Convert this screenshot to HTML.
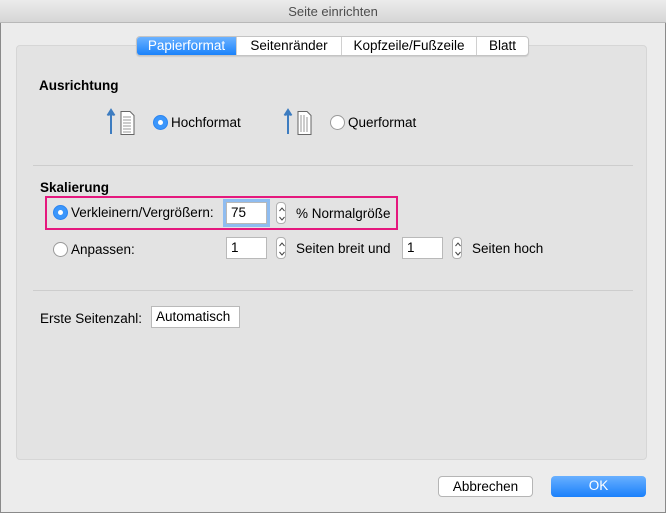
<!DOCTYPE html>
<html><head><meta charset="utf-8"><style>
*{box-sizing:border-box;margin:0;padding:0}
body{width:666px;height:513px;overflow:hidden;background:#ececec;font-family:"Liberation Sans",Arial,sans-serif;font-size:13.5px;color:#000;position:relative}
.a{position:absolute;white-space:nowrap}
.win{left:0;top:0;width:666px;height:513px;border:1px solid #8a8a8a;border-top:none}
.title{left:0;top:0;width:666px;height:23px;background:linear-gradient(#ececec,#d6d6d6);border-bottom:1px solid #b8b8b8;text-align:center;line-height:24px;color:#4d4d4d;font-size:13px}
.panel{left:16px;top:45px;width:491px;height:415px;background:#e3e3e3;border:1px solid #d6d6d6;border-radius:4px;width:490px}
.tabs{left:136px;top:36px;height:20px;display:flex;border:1px solid #c4c4c4;border-radius:4px;background:#fff;overflow:hidden;box-shadow:0 1px 1px rgba(0,0,0,.1)}
.tabs div{line-height:18px;border-left:1px solid #d0d0d0;text-align:center}
.tabs div:first-child{border:none;background:linear-gradient(#6cb2ff,#1a82fb);color:#fff}
.b{font-weight:bold}
.rad{width:15px;height:15px;border-radius:50%;background:#fff;border:1px solid #9a9a9a}
.rad.on{background:#3b96fb;border-color:#2a84f0}
.rad.on:after{content:"";position:absolute;left:4px;top:4px;width:5px;height:5px;border-radius:50%;background:#fff}
.inp{background:#fff;border:1px solid #b9b9b9;height:22px;line-height:20px;padding-left:4px}
.step{width:10px;height:22px;border:1px solid #b0b0b0;border-radius:4px;background:#fff}
.sep{height:1px;background:#cdcdcd;left:33px;width:600px}
.btn{height:21px;border-radius:4px;text-align:center;line-height:20px}
</style></head><body>
<div class="a win"></div>
<div class="a title">Seite einrichten</div>
<div class="a panel" style="width:631px"></div>
<div class="a tabs"><div style="width:99px">Papierformat</div><div style="width:105px">Seitenränder</div><div style="width:135px">Kopfzeile/Fußzeile</div><div style="width:52px">Blatt</div></div>
<div class="a b" style="left:39px;top:78px">Ausrichtung</div>
<svg class="a" style="left:106px;top:108px" width="34" height="27"><path d="M5 26V4M1.5 7.5L5 2L8.5 7.5" stroke="#3d7cc0" stroke-width="2" fill="#3d7cc0"/><path d="M15 3.5h9l4 4v19H15z" fill="#fff" stroke="#666"/><path d="M17 9h8M17 12h8M17 15h8M17 18h8M17 21h8M17 24h8" stroke="#999"/></svg>
<div class="a rad on" style="left:153px;top:115px"></div>
<div class="a" style="left:171px;top:115px">Hochformat</div>
<svg class="a" style="left:283px;top:108px" width="34" height="27"><path d="M5 26V4M1.5 7.5L5 2L8.5 7.5" stroke="#3d7cc0" stroke-width="2" fill="#3d7cc0"/><path d="M15 3.5h9l4 4v19H15z" fill="#fff" stroke="#666"/><path d="M18 7v17M21 7v17M24 9v15" stroke="#999"/></svg>
<div class="a rad" style="left:330px;top:115px"></div>
<div class="a" style="left:348px;top:115px">Querformat</div>
<div class="a sep" style="top:165px"></div>
<div class="a b" style="left:40px;top:180px">Skalierung</div>
<div class="a" style="left:45px;top:196px;width:353px;height:34px;border:2px solid #e5187e"></div>
<div class="a rad on" style="left:53px;top:205px"></div>
<div class="a" style="left:71px;top:205px">Verkleinern/Vergrößern:</div>
<div class="a inp" style="left:226px;top:202px;width:41px;box-shadow:0 0 0 3px #8fbcf0">75</div>
<svg class="a step" style="left:276px;top:202px" width="10" height="22"><path d="M2.5 8L5 5L7.5 8M2.5 14L5 17L7.5 14" stroke="#444" fill="none"/></svg>
<div class="a" style="left:296px;top:206px">% Normalgröße</div>
<div class="a rad" style="left:53px;top:242px"></div>
<div class="a" style="left:71px;top:242px">Anpassen:</div>
<div class="a inp" style="left:226px;top:237px;width:41px">1</div>
<svg class="a step" style="left:276px;top:237px" width="10" height="22"><path d="M2.5 8L5 5L7.5 8M2.5 14L5 17L7.5 14" stroke="#444" fill="none"/></svg>
<div class="a" style="left:296px;top:241px">Seiten breit und</div>
<div class="a inp" style="left:402px;top:237px;width:41px">1</div>
<svg class="a step" style="left:452px;top:237px" width="10" height="22"><path d="M2.5 8L5 5L7.5 8M2.5 14L5 17L7.5 14" stroke="#444" fill="none"/></svg>
<div class="a" style="left:472px;top:241px">Seiten hoch</div>
<div class="a sep" style="top:290px"></div>
<div class="a" style="left:40px;top:311px">Erste Seitenzahl:</div>
<div class="a inp" style="left:151px;top:306px;width:89px">Automatisch</div>
<div class="a btn" style="left:438px;top:476px;width:95px;background:#fff;border:1px solid #b5b5b5">Abbrechen</div>
<div class="a btn" style="left:551px;top:476px;width:95px;background:linear-gradient(#69b0ff,#1a80fb);color:#fff">OK</div>
</body></html>
